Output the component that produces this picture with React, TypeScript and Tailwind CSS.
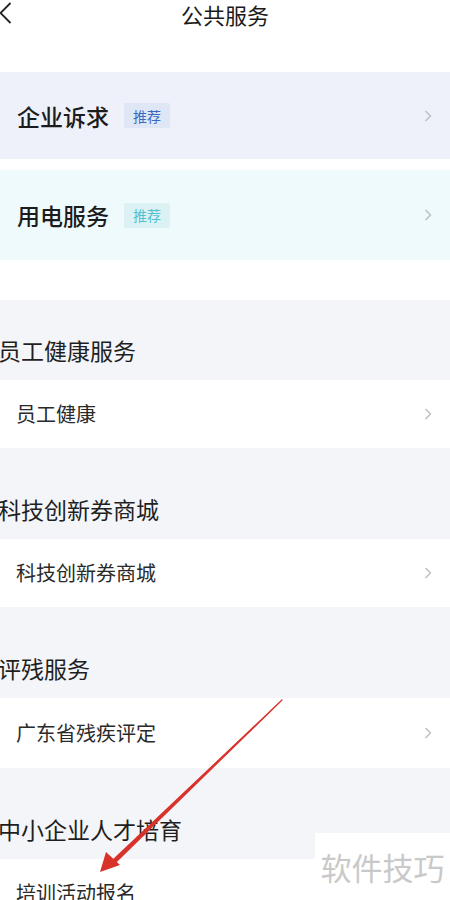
const font = { fontFamily: '"Noto Sans CJK SC", "Noto Sans", sans-serif' }

interface Group {
    title: string
    item: string
    h: string
}

const groups: Group[] = [
    { title: '员工健康服务', item: '员工健康', h: 'h-[68px]' },
    { title: '科技创新券商城', item: '科技创新券商城', h: 'h-[68px]' },
    { title: '评残服务', item: '广东省残疾评定', h: 'h-[70px]' },
    { title: '中小企业人才培育', item: '培训活动报名', h: 'h-[68px]' },
]

function Arrow() {
    return (
        <svg className="ml-auto shrink-0" width="8" height="12" viewBox="0 0 8 12" fill="none">
            <path d="M1.5 1 L6.5 6 L1.5 11" stroke="#bfc2c8" strokeWidth="1.6" strokeLinejoin="round" />
        </svg>
    )
}

function FeatureCard({ title, tone }: { title: string; tone: 'blue' | 'cyan' }) {
    const isBlue = tone === 'blue'
    return (
        <div className={`flex items-center pl-[17px] pr-[18px] ${isBlue ? 'h-[87px] bg-[#eef0fa]' : 'h-[90px] bg-[#eefafc]'}`}>
            <span className="text-[23px] leading-[30px] font-medium text-[#1c1c1c]">{title}</span>
            <span
                className={`ml-[15px] h-[25px] w-[46px] flex items-center justify-center rounded-[2px] text-[14px] leading-none ${isBlue ? 'bg-[#dfe6f6] text-[#3a6bbf]' : 'bg-[#dcf1f4] text-[#52c1d2]'
                    }`}
            >
                推荐
            </span>
            <Arrow />
        </div>
    )
}

export default function App() {
    return (
        <div className="relative w-[450px] h-[900px] overflow-hidden bg-white" style={font}>
            {/* 顶部导航 */}
            <div className="relative h-[72px]">
                <svg className="absolute left-0 top-[2px]" width="12" height="22" viewBox="0 0 12 22" fill="none">
                    <path d="M10.5 1 L0.5 11 L10.5 21" stroke="#222" strokeWidth="1.8" />
                </svg>
                <div className="text-center text-[22px] leading-[26px] text-[#1a1a1a] pt-[1px]">公共服务</div>
            </div>

            {/* 推荐卡片 */}
            <FeatureCard title="企业诉求" tone="blue" />
            <div className="h-[11px]" />
            <FeatureCard title="用电服务" tone="cyan" />
            <div className="h-[40px]" />

            {/* 服务分组 */}
            <div className="bg-[#f3f5f8] flex flex-col gap-[11px]">
                {groups.map((g) => (
                    <div key={g.title}>
                        <div className="h-[80px] flex items-end pb-[15px] -ml-[2px]">
                            <span className="text-[23px] leading-[30px] text-[#1f1f1f]">{g.title}</span>
                        </div>
                        <div className={`${g.h} bg-white flex items-center pl-[16px] pr-[18px]`}>
                            <span className="text-[20px] leading-[26px] text-[#2a2a2a]">{g.item}</span>
                            <Arrow />
                        </div>
                    </div>
                ))}
            </div>

            {/* 红色箭头标注 */}
            <svg className="absolute left-0 top-0 pointer-events-none" width="450" height="900" viewBox="0 0 450 900">
                <path d="M282 700 L113 860 L116 862 Z" fill="#d8322b" stroke="#d8322b" strokeWidth="1.2" strokeLinejoin="round" />
                <path d="M100 872 L106 852 L120 865 Z" fill="#d8322b" />
            </svg>

            {/* 水印 */}
            <div className="absolute left-[315px] top-[833px] w-[135px] h-[67px] bg-white flex items-center justify-center">
                <span className="text-[31px] leading-none text-[#c9c9c9]">软件技巧</span>
            </div>
        </div>
    )
}
